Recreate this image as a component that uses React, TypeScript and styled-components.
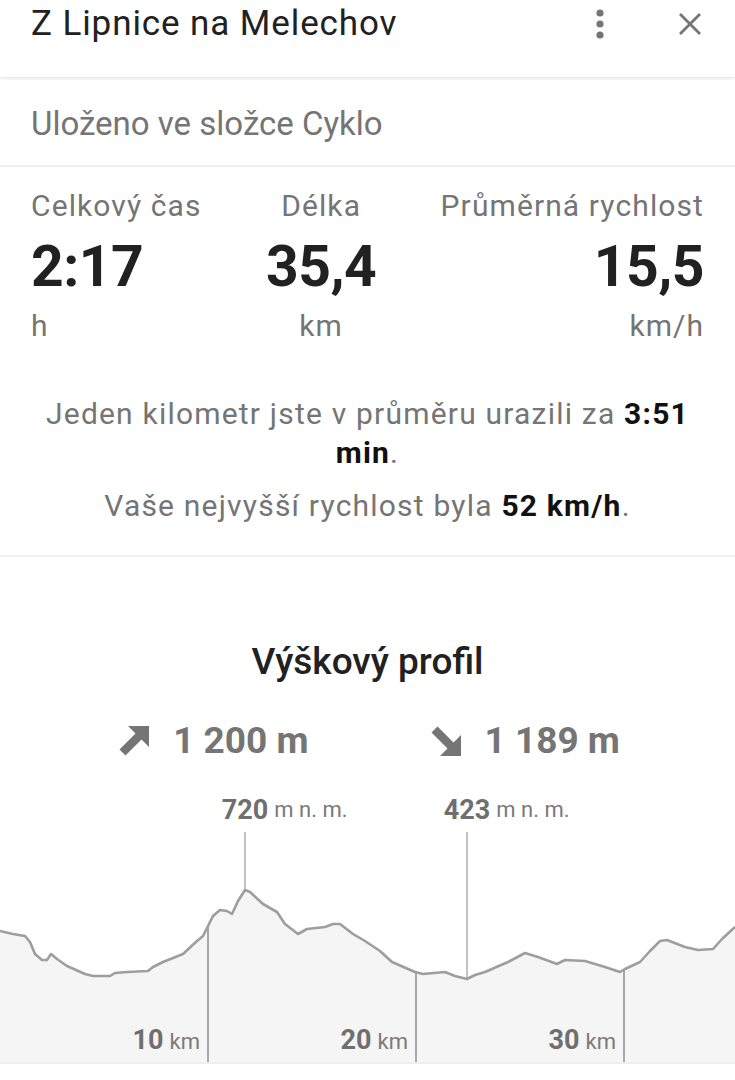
import React from "react";
import styled, { createGlobalStyle } from "styled-components";

const Global = createGlobalStyle`
  html, body { margin: 0; padding: 0; background: #ffffff; }
  body { font-family: Roboto, "Noto Sans", Arial, sans-serif; -webkit-font-smoothing: antialiased; }
  * { box-sizing: border-box; }
`;

const Page = styled.div`
  width: 735px;
  background: #ffffff;
  color: #212121;
`;

const Header = styled.header`
  height: 77px;
  display: flex;
  align-items: flex-start;
  padding: 4px 25px 0 31px;
  background: #fff;
  box-shadow: 0 2px 3px rgba(0, 0, 0, 0.09);
  position: relative;
  z-index: 1;
`;

const Title = styled.h1`
  flex: 1;
  margin: 0;
  font-size: 35px;
  line-height: 40px;
  letter-spacing: 0.9px;
  font-weight: 400;
  color: #212121;
  white-space: nowrap;
`;

const IconButton = styled.button<{ $gap?: number }>`
  border: 0;
  background: transparent;
  padding: 0;
  width: 40px;
  height: 40px;
  display: flex;
  align-items: center;
  justify-content: center;
  color: #757575;
  margin-left: ${(p) => p.$gap ?? 0}px;
`;

const Section = styled.section<{ $pt: number; $pb: number; $border?: boolean }>`
  padding: ${(p) => p.$pt}px 31px ${(p) => p.$pb}px 31px;
  border-bottom: ${(p) => (p.$border ? "2px solid #efefef" : "none")};
`;

const Folder = styled.div`
  font-size: 33px;
  line-height: 40px;
  color: #757575;
`;

const StatsRow = styled.div`
  display: flex;
  justify-content: space-between;
`;

const Stat = styled.div<{ $align: "flex-start" | "center" | "flex-end" }>`
  display: flex;
  flex-direction: column;
  align-items: ${(p) => p.$align};
`;

const StatLabel = styled.div`
  font-size: 30px;
  line-height: 40px;
  letter-spacing: 1.1px;
  color: #757575;
  white-space: nowrap;
`;

const StatValue = styled.div`
  font-size: 57px;
  line-height: 64px;
  letter-spacing: -0.5px;
  font-weight: 700;
  color: #212121;
  margin-top: 9px;
`;

const StatUnit = styled.div`
  font-size: 30px;
  line-height: 40px;
  letter-spacing: 1px;
  color: #757575;
  margin-top: 7px;
`;

const Summary = styled.p<{ $mt: number }>`
  margin: ${(p) => p.$mt}px 0 0 0;
  text-align: center;
  font-size: 30px;
  line-height: 39px;
  letter-spacing: 1.2px;
  color: #757575;
  padding: 0 4px;
`;

const Strong = styled.b`
  color: #111;
  font-weight: 700;
`;

const ProfileSection = styled.section`
  padding-top: 85px;
`;

const ProfileTitle = styled.h2`
  margin: 0;
  text-align: center;
  font-size: 37px;
  line-height: 40px;
  font-weight: 500;
  color: #212121;
`;

const ClimbRow = styled.div`
  display: flex;
  justify-content: center;
  gap: 122px;
  margin-top: 39px;
  padding-left: 4px;
`;

const Climb = styled.div`
  display: flex;
  align-items: center;
  gap: 24px;
`;

const ClimbValue = styled.span`
  font-size: 37px;
  line-height: 40px;
  font-weight: 700;
  color: #757575;
  white-space: nowrap;
`;

const Chart = styled.div`
  position: relative;
  height: 285px;
  margin-top: 18px;
  border-bottom: 2px solid #efefef;
`;

const ChartSvg = styled.svg`
  display: block;
  width: 735px;
  height: 283px;
`;

const PeakNum = styled.span`
  position: absolute;
  top: 16px;
  transform: translateX(-50%);
  font-size: 27px;
  line-height: 30px;
  font-weight: 700;
  color: #6f6f6f;
  white-space: nowrap;
`;

const PeakUnit = styled.span`
  position: absolute;
  left: 100%;
  bottom: 0;
  margin-left: 6px;
  font-size: 22px;
  line-height: 30px;
  font-weight: 400;
  color: #7a7a7a;
`;

const KmLabel = styled.span`
  position: absolute;
  bottom: 5px;
  font-size: 27px;
  line-height: 30px;
  font-weight: 700;
  color: #6f6f6f;
  white-space: nowrap;
`;

const KmUnit = styled.span`
  margin-left: 6px;
  font-size: 22px;
  font-weight: 400;
  color: #7a7a7a;
`;

const pts: [number, number][] = [
  [0, 932], [13, 935], [25, 937], [30, 943], [35, 955], [42, 961], [47, 961], [51, 955],
  [57, 960], [67, 967], [85, 975], [93, 977], [110, 977], [115, 974], [127, 973], [148, 972],
  [153, 968], [163, 963], [183, 955], [197, 942], [203, 937], [208, 927], [213, 917], [220, 911],
  [227, 912], [232, 915], [238, 902], [245, 891], [250, 893], [263, 905], [277, 913], [285, 925],
  [298, 935], [307, 930], [325, 928], [333, 925], [340, 925], [353, 935], [365, 942], [380, 952],
  [392, 963], [415, 973], [423, 975], [445, 973], [455, 977], [467, 980], [475, 976], [485, 973],
  [508, 963], [525, 954], [538, 958], [557, 965], [565, 961], [585, 962], [605, 968], [620, 973],
  [625, 970], [640, 963], [650, 952], [660, 942], [667, 941], [685, 948], [698, 951], [713, 950],
  [722, 940], [735, 928],
];

const OFF = 780;
const line = pts.map(([x, y], i) => `${i ? "L" : "M"}${x} ${y - OFF}`).join(" ");
const area = `${line} L735 283 L0 283 Z`;

const yAt = (x: number) => {
  for (let i = 1; i < pts.length; i++) {
    const [x1, y1] = pts[i];
    const [x0, y0] = pts[i - 1];
    if (x <= x1) return y0 + ((y1 - y0) * (x - x0)) / (x1 - x0) - OFF;
  }
  return 0;
};

const kms = [
  { x: 208, n: "10" },
  { x: 416, n: "20" },
  { x: 624, n: "30" },
];

const peaks = [
  { x: 245, n: "720" },
  { x: 467, n: "423" },
];

const Dots = () => (
  <svg width="12" height="30" viewBox="0 0 12 30">
    <circle cx="6" cy="4" r="3.6" fill="currentColor" />
    <circle cx="6" cy="15" r="3.6" fill="currentColor" />
    <circle cx="6" cy="26" r="3.6" fill="currentColor" />
  </svg>
);

const Close = () => (
  <svg width="24" height="24" viewBox="0 0 24 24">
    <path d="M2 2 L22 22 M22 2 L2 22" stroke="currentColor" strokeWidth="2.8" fill="none" />
  </svg>
);

const Arrow = ({ down }: { down?: boolean }) => (
  <svg width="30" height="30" viewBox="0 0 30 30" style={down ? { transform: "scaleY(-1)" } : undefined}>
    <polygon points="9,0 30,0 30,21" fill="#757575" />
    <line x1="3.5" y1="26.5" x2="21" y2="9" stroke="#757575" strokeWidth="8.5" />
  </svg>
);

export default function App() {
  return (
    <Page>
      <Global />
      <Header>
        <Title>Z Lipnice na Melechov</Title>
        <IconButton aria-label="menu">
          <Dots />
        </IconButton>
        <IconButton aria-label="close" $gap={50}>
          <Close />
        </IconButton>
      </Header>

      <Section $pt={27} $pb={21} $border>
        <Folder>Uloženo ve složce Cyklo</Folder>
      </Section>

      <Section $pt={19} $pb={30} $border>
        <StatsRow>
          <Stat $align="flex-start">
            <StatLabel>Celkový čas</StatLabel>
            <StatValue>2:17</StatValue>
            <StatUnit>h</StatUnit>
          </Stat>
          <Stat $align="center">
            <StatLabel>Délka</StatLabel>
            <StatValue>35,4</StatValue>
            <StatUnit>km</StatUnit>
          </Stat>
          <Stat $align="flex-end">
            <StatLabel>Průměrná rychlost</StatLabel>
            <StatValue>15,5</StatValue>
            <StatUnit>km/h</StatUnit>
          </Stat>
        </StatsRow>
        <Summary $mt={48}>
          Jeden kilometr jste v průměru urazili za <Strong>3:51</Strong> <Strong>min</Strong>.
        </Summary>
        <Summary $mt={14}>
          Vaše nejvyšší rychlost byla <Strong>52 km/h</Strong>.
        </Summary>
      </Section>

      <ProfileSection>
        <ProfileTitle>Výškový profil</ProfileTitle>
        <ClimbRow>
          <Climb>
            <Arrow />
            <ClimbValue>1 200 m</ClimbValue>
          </Climb>
          <Climb>
            <Arrow down />
            <ClimbValue>1 189 m</ClimbValue>
          </Climb>
        </ClimbRow>
        <Chart>
          <ChartSvg viewBox="0 0 735 283">
            <path d={area} fill="#f5f5f5" />
            {peaks.map((p) => (
              <line key={p.x} x1={p.x} y1={53} x2={p.x} y2={yAt(p.x)} stroke="#c4c4c4" strokeWidth="2" />
            ))}
            {kms.map((k) => (
              <line key={k.x} x1={k.x} y1={yAt(k.x)} x2={k.x} y2={283} stroke="#a8a8a8" strokeWidth="2" />
            ))}
            <path d={line} fill="none" stroke="#9e9e9e" strokeWidth="2.6" strokeLinejoin="round" />
          </ChartSvg>
          {peaks.map((p) => (
            <PeakNum key={p.x} style={{ left: p.x }}>
              {p.n}
              <PeakUnit>m n. m.</PeakUnit>
            </PeakNum>
          ))}
          {kms.map((k) => (
            <KmLabel key={k.x} style={{ right: 735 - k.x + 8 }}>
              {k.n}
              <KmUnit>km</KmUnit>
            </KmLabel>
          ))}
        </Chart>
      </ProfileSection>
    </Page>
  );
}
